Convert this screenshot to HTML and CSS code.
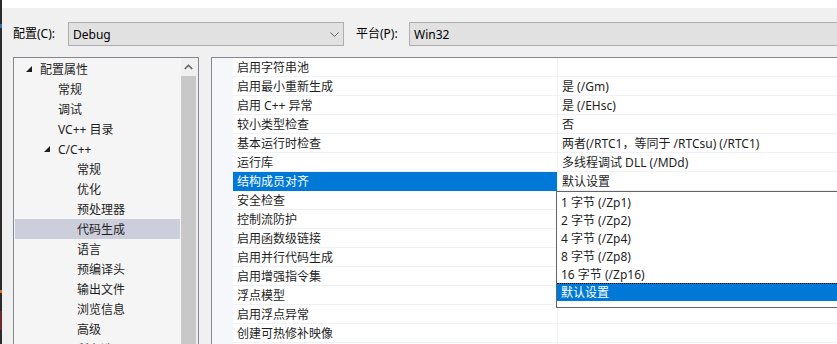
FILE: index.html
```html
<!DOCTYPE html>
<html lang="zh-CN">
<head>
    <meta charset="UTF-8">
    <title>属性页</title>
    <link rel="stylesheet" href="styles.css">
</head>
<body>
<div class="edge"></div>
<div class="dialog">
    <div class="topband"></div>
    <div class="toolbar">
        <label class="lbl cfg-lbl">配置(C):</label>
        <div class="combo cfg-combo">
            <span>Debug</span>
            <svg class="chev" width="9" height="6" viewBox="0 0 9 6"><polyline points="0.5,0.5 4.5,4.5 8.5,0.5" fill="none" stroke="#5f5f5f" stroke-width="1"/></svg>
        </div>
        <label class="lbl plat-lbl">平台(P):</label>
        <div class="combo plat-combo"><span>Win32</span></div>
    </div>
    <div class="panes">
        <div class="tree">
            <ul class="tree-list">
                <li class="lv1"><svg class="tri" width="6" height="6" viewBox="0 0 6 6"><polygon points="6,0 6,6 0,6" fill="#1e1e1e"/></svg>配置属性</li>
                <li class="lv2">常规</li>
                <li class="lv2">调试</li>
                <li class="lv2">VC++ 目录</li>
                <li class="lv2 open"><svg class="tri" width="6" height="6" viewBox="0 0 6 6"><polygon points="6,0 6,6 0,6" fill="#1e1e1e"/></svg>C/C++</li>
                <li class="lv3">常规</li>
                <li class="lv3">优化</li>
                <li class="lv3">预处理器</li>
                <li class="lv3 selected">代码生成</li>
                <li class="lv3">语言</li>
                <li class="lv3">预编译头</li>
                <li class="lv3">输出文件</li>
                <li class="lv3">浏览信息</li>
                <li class="lv3">高级</li>
                <li class="lv3">所有选项</li>
            </ul>
            <div class="scrollbar">
                <div class="sb-up">
                    <svg width="9" height="6" viewBox="0 0 9 6"><polyline points="0.8,5 4.5,1.3 8.2,5" fill="none" stroke="#606060" stroke-width="1.6"/></svg>
                </div>
                <div class="sb-thumb"></div>
            </div>
        </div>
        <div class="grid">
            <div class="gutter"></div>
            <div class="rows">
                <div class="row"><div class="name">启用字符串池</div><div class="value"></div></div>
                <div class="row"><div class="name">启用最小重新生成</div><div class="value">是 (/Gm)</div></div>
                <div class="row"><div class="name">启用 C++ 异常</div><div class="value">是 (/EHsc)</div></div>
                <div class="row"><div class="name">较小类型检查</div><div class="value">否</div></div>
                <div class="row"><div class="name">基本运行时检查</div><div class="value">两者(/RTC1，等同于 /RTCsu) (/RTC1)</div></div>
                <div class="row"><div class="name">运行库</div><div class="value">多线程调试 DLL (/MDd)</div></div>
                <div class="row active"><div class="name">结构成员对齐</div><div class="value">默认设置</div></div>
                <div class="row"><div class="name">安全检查</div><div class="value"></div></div>
                <div class="row"><div class="name">控制流防护</div><div class="value"></div></div>
                <div class="row"><div class="name">启用函数级链接</div><div class="value"></div></div>
                <div class="row"><div class="name">启用并行代码生成</div><div class="value"></div></div>
                <div class="row"><div class="name">启用增强指令集</div><div class="value"></div></div>
                <div class="row"><div class="name">浮点模型</div><div class="value"></div></div>
                <div class="row"><div class="name">启用浮点异常</div><div class="value"></div></div>
                <div class="row"><div class="name">创建可热修补映像</div><div class="value"></div></div>
                <div class="row"><div class="name"></div><div class="value"></div></div>
            </div>
            <ul class="dropdown">
                <li>1 字节 (/Zp1)</li>
                <li>2 字节 (/Zp2)</li>
                <li>4 字节 (/Zp4)</li>
                <li>8 字节 (/Zp8)</li>
                <li>16 字节 (/Zp16)</li>
                <li class="picked">默认设置</li>
            </ul>
        </div>
    </div>
</div>
</body>
</html>
```

FILE: styles.css
```css
* {
    box-sizing: border-box;
}
html,
body {
    height: 100%;
}
body {
    background: #f0f0f0;
    color: #1e1e1e;
    display: flex;
    font-family: "Noto Sans", "Noto Sans CJK SC", sans-serif;
    font-size: 12px;
    margin: 0;
    overflow: hidden;
}
.edge {
    background: linear-gradient(to bottom, #2b2b2b 0, #2b2b2b 24px, #3a6ea5 24px, #3a6ea5 28px, #2b2b2b 28px, #2b2b2b 290px, #e07020 290px, #e07020 293px, #2b2b2b 293px, #2b2b2b 311px, #6a2a2a 311px, #6a2a2a 330px, #2b2b2b 330px);
    flex: 0 0 2px;
}
.dialog {
    display: flex;
    flex: 1;
    flex-direction: column;
    min-width: 0;
}
.topband {
    background: #fff;
    height: 8px;
}
.toolbar {
    align-items: center;
    display: flex;
    padding: 14px 0 11px 11px;
}
.lbl {
    color: #000;
    line-height: 24px;
}
.cfg-lbl {
    width: 55px;
}
.plat-lbl {
    margin-left: 12px;
    width: 53px;
}
.combo {
    align-items: center;
    background: #e1e1e1;
    border: solid 1px #adadad;
    color: #000;
    display: flex;
    height: 24px;
    padding-left: 4px;
    padding-top: 1px;
}
.cfg-combo {
    justify-content: space-between;
    padding-right: 4px;
    width: 276px;
}
.plat-combo {
    flex: 1;
    margin-right: -20px;
}
.chev {
    display: block;
}
.panes {
    display: flex;
    flex: 1;
    min-height: 0;
    padding-left: 11px;
}
.tree {
    background: #f0f0f0;
    border: solid 1px #828790;
    border-bottom: none;
    display: flex;
    flex: 0 0 186px;
    padding-right: 2px;
}
.tree-list {
    background: #f5f5f5;
    flex: 1;
    list-style: none;
    margin: 0;
    padding: 1px 1px 0 1px;
}
.tree-list li {
    align-items: center;
    display: flex;
    height: 20px;
    white-space: nowrap;
}
.tree-list .lv1 {
    padding-left: 11px;
}
.tree-list .lv2 {
    padding-left: 43px;
}
.tree-list .lv2.open {
    padding-left: 29px;
}
.tree-list .lv3 {
    padding-left: 62px;
}
.tree-list .tri {
    display: block;
    flex: none;
    margin-right: 8px;
}
.tree-list .selected {
    background: #cccedb;
}
.scrollbar {
    display: flex;
    flex: 0 0 15px;
    flex-direction: column;
}
.sb-up {
    align-items: center;
    display: flex;
    height: 18px;
    justify-content: center;
}
.sb-up svg {
    display: block;
}
.sb-thumb {
    background: #c8c8c8;
    flex: 1;
}
.grid {
    background: #fff;
    border: solid 1px #828790;
    border-bottom: none;
    border-right: none;
    display: flex;
    flex: 1;
    margin-left: 12px;
    position: relative;
}
.gutter {
    background: #f5f7fb;
    flex: 0 0 21px;
}
.rows {
    flex: 1;
}
.row {
    display: grid;
    grid-template-columns: 324px 1fr;
    height: 19px;
}
.row .name,
.row .value {
    border-bottom: solid 1px #eff1f6;
    line-height: 16px;
    padding: 2px 0 0 4px;
    white-space: nowrap;
}
.row .value {
    border-left: solid 1px #eff1f6;
}
.row.active .name {
    background: #0078d7;
    border-bottom-color: #0078d7;
    color: #fff;
}
.dropdown {
    background: #fff;
    border: solid 1px #646464;
    height: 117px;
    left: 344px;
    list-style: none;
    margin: 0;
    padding: 1px 0 0;
    position: absolute;
    top: 133px;
    width: 300px;
}
.dropdown li {
    height: 18px;
    line-height: 16px;
    padding: 2px 0 0 4px;
    white-space: nowrap;
}
.dropdown .picked {
    background: #0078d7;
    border-top: dotted 1px #000;
    color: #fff;
    padding-top: 1px;
}
```
